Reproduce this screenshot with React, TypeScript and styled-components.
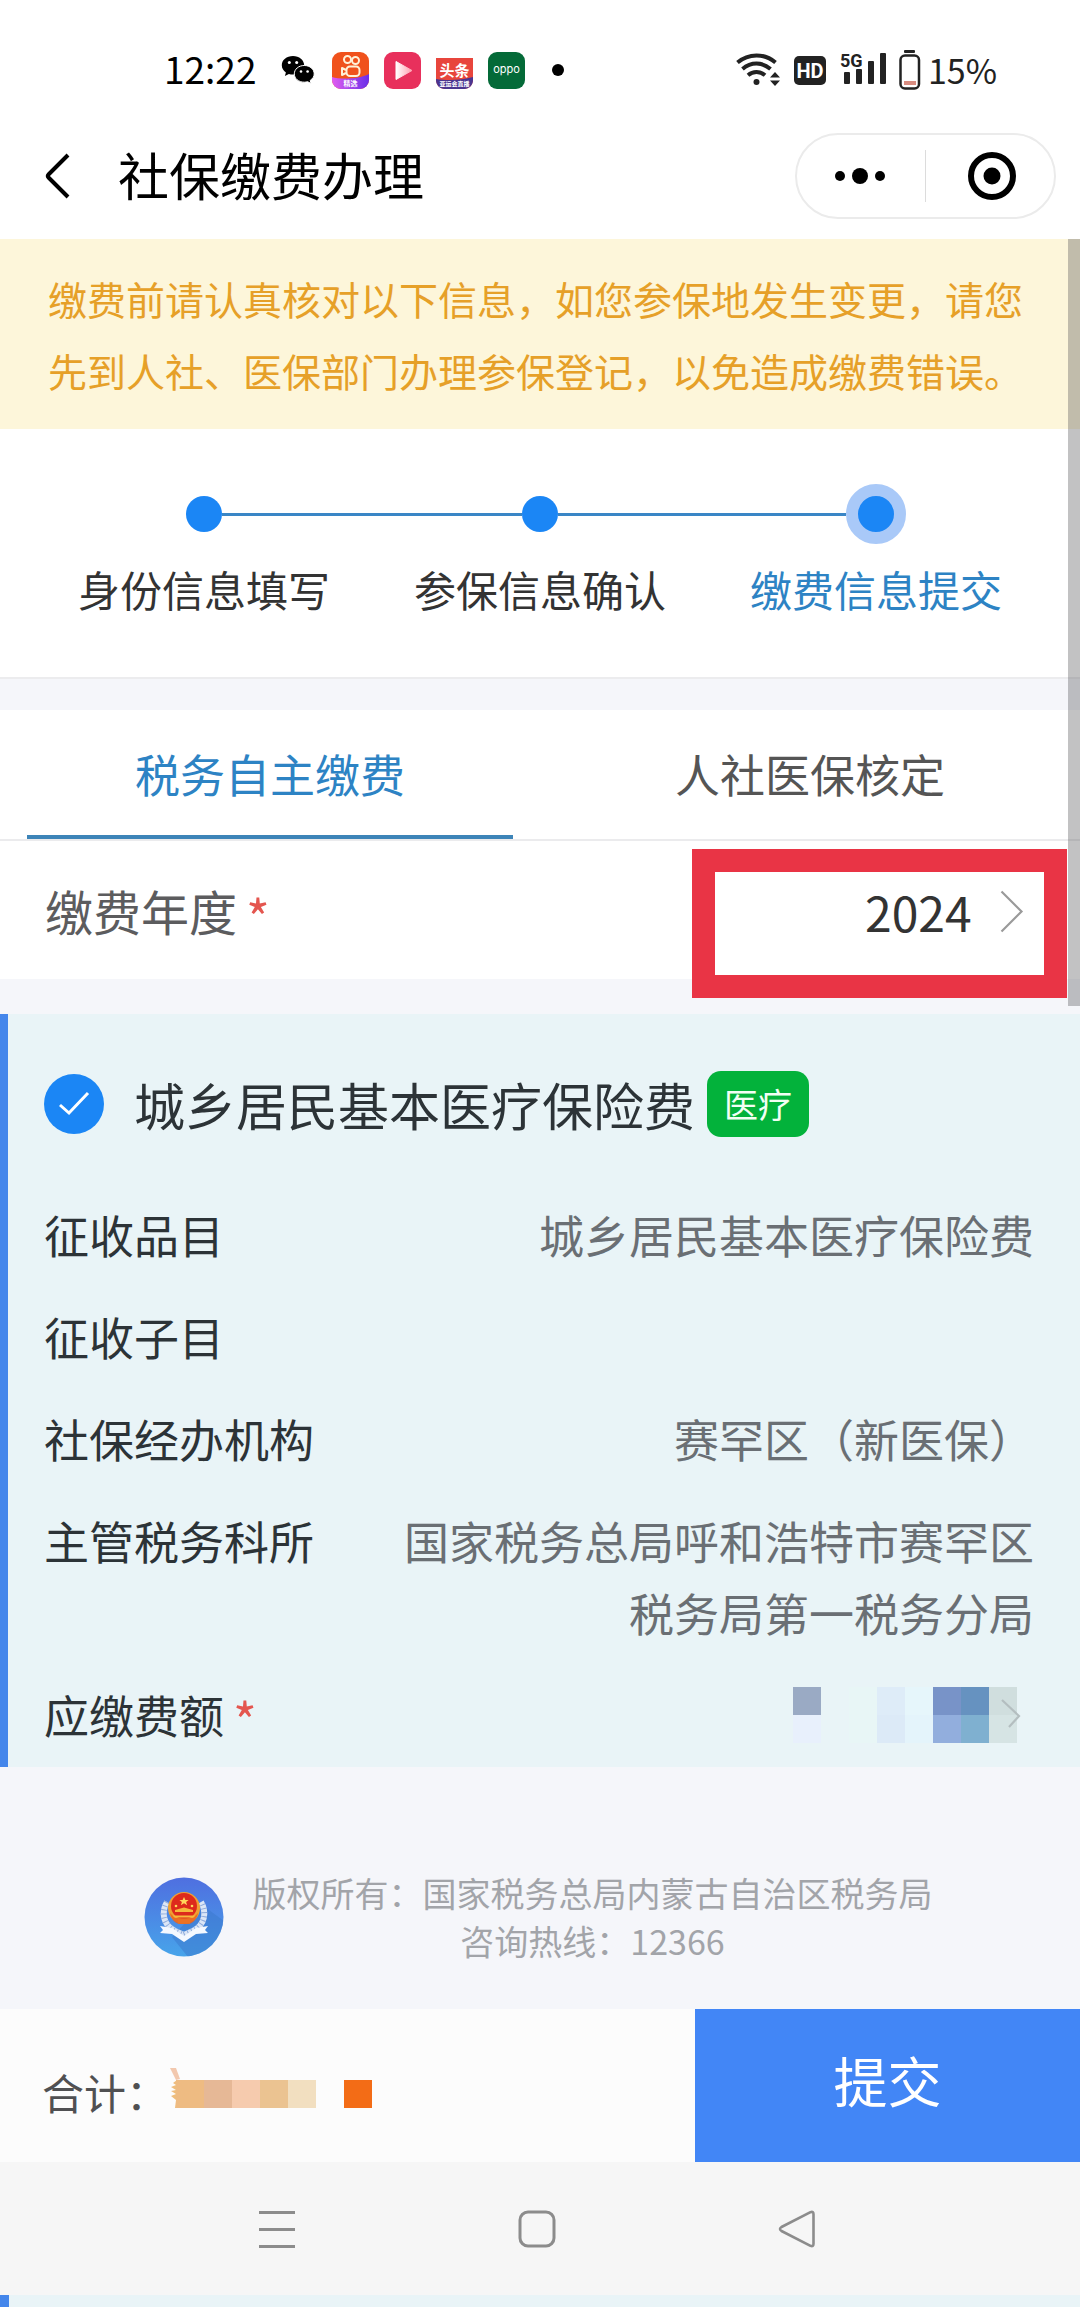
import React from "react";
import styled, { createGlobalStyle } from "styled-components";

const FONT = `"Noto Sans CJK SC", "Noto Sans", sans-serif`;

const color = {
  ink: "#333333",
  cardInk: "#2c3337",
  muted: "#6a6f74",
  faint: "#a2a4a9",
  link: "#2d83c4",
  primary: "#1b86f5",
  submit: "#4286f6",
  cardBar: "#4486eb",
  card: "#e9f4f7",
  band: "#f5f6fa",
  required: "#e4564f",
  callout: "#e93445",
};

const GlobalStyle = createGlobalStyle`
  *, *::before, *::after { box-sizing: border-box; }
  body {
    margin: 0;
    background: #fff;
    color: ${color.ink};
    font-family: ${FONT};
  }
  button, select, input {
    margin: 0;
    padding: 0;
    border: 0;
    background: none;
    color: inherit;
    font: inherit;
  }
  button, select, label { cursor: pointer; }
  p, h1, h2, ol, dl, dd { margin: 0; padding: 0; font-weight: 400; }
  svg { display: block; flex: none; overflow: visible; }
`;

const Page = styled.div`
  display: flex;
  flex-direction: column;
`;

/* ---------- status bar ---------- */

const StatusBar = styled.div`
  display: flex;
  align-items: center;
  justify-content: space-between;
  height: 112px;
  padding: 28px 83px 0 164px;
`;

const StatusGroup = styled.div<{ $gap: number }>`
  display: flex;
  align-items: center;
  gap: ${(p) => p.$gap}px;
`;

const Clock = styled.span`
  margin-right: 10px;
  padding-bottom: 4px;
  color: #000;
  font-size: 37px;
  line-height: 44px;
`;

const BatteryText = styled.span`
  color: #222;
  font-size: 34px;
  line-height: 44px;
`;

const MoreIndicator = styled.span`
  margin-left: 12px;
`;

const SignalWrap = styled.span`
  margin-left: 3px;
`;

/* ---------- header ---------- */

const Header = styled.header`
  display: flex;
  align-items: center;
  height: 127px;
  padding: 0 24px 0 45px;
`;

const Title = styled.h1`
  flex: 1;
  margin-left: 48px;
  padding-bottom: 3px;
  color: #000;
  font-size: 51px;
  line-height: 72px;
`;

const Capsule = styled.div`
  display: flex;
  align-items: center;
  width: 261px;
  height: 86px;
  border: 2px solid #ebebeb;
  border-radius: 43px;
`;

const CapsuleButton = styled.button`
  display: flex;
  flex: 1;
  justify-content: center;
`;

const CapsuleDivider = styled.span`
  width: 1px;
  height: 52px;
  background: #dcdcdc;
`;

/* ---------- content ---------- */

const Main = styled.main`
  position: relative;
  background: ${color.band};
`;

const ScrollThumb = styled.div`
  position: absolute;
  top: 0;
  right: 0;
  z-index: 2;
  width: 12px;
  height: 767px;
  background: rgba(80, 80, 84, 0.35);
`;

const Notice = styled.p`
  padding: 23px 48px 23px;
  background: #fdf6da;
  color: #e6a028;
  font-size: 39px;
  line-height: 72px;
`;

const Steps = styled.ol`
  display: flex;
  padding: 55px 36px 58px;
  background: #fff;
  border-bottom: 2px solid #ececee;
  list-style: none;
`;

const Step = styled.li`
  display: flex;
  flex: 1;
  flex-direction: column;
  gap: 15px;
`;

const StepTrack = styled.div`
  display: flex;
  align-items: center;
  height: 60px;
`;

const StepLine = styled.span<{ $shown: boolean }>`
  flex: 1;
  height: 3px;
  background: ${(p) => (p.$shown ? "#3a86c6" : "transparent")};
`;

const StepDot = styled.span<{ $current: boolean }>`
  width: ${(p) => (p.$current ? 60 : 36)}px;
  height: ${(p) => (p.$current ? 60 : 36)}px;
  border: ${(p) => (p.$current ? "12px solid #a9c9f8" : "0")};
  border-radius: 50%;
  background: ${color.primary};
`;

const StepLabel = styled.span<{ $current: boolean }>`
  color: ${(p) => (p.$current ? color.link : color.ink)};
  font-size: 42px;
  line-height: 60px;
  text-align: center;
`;

const Tabs = styled.div`
  display: flex;
  margin-top: 31px;
  background: #fff;
  border-bottom: 2px solid #ebebed;
`;

const Tab = styled.button<{ $active: boolean }>`
  flex: 1;
  margin: 0 27px;
  padding: 31px 0 28px;
  border-bottom: 4px solid ${(p) => (p.$active ? "#3d84b8" : "transparent")};
  color: ${(p) => (p.$active ? color.link : "#555")};
  font-size: 45px;
  line-height: 66px;
`;

const YearRow = styled.div`
  position: relative;
  display: flex;
  align-items: center;
  justify-content: space-between;
  padding: 33px 57px 31px 45px;
  background: #fff;
  font-size: 48px;
  line-height: 72px;
`;

const YearLabel = styled.label`
  height: 74px;
  color: #5c5c5e;
`;

const Required = styled.span`
  margin-left: 9px;
  color: ${color.required};
  font-size: 51px;
  line-height: 0;
  vertical-align: -7px;
`;

const YearPicker = styled.div`
  display: flex;
  align-items: center;
  gap: 28px;
`;

const YearSelect = styled.select`
  appearance: none;
  height: 72px;
  padding-bottom: 5px;
  outline: 0;
`;

const Callout = styled.div`
  position: absolute;
  top: 8px;
  right: 13px;
  z-index: 1;
  width: 375px;
  height: 149px;
  border: 23px solid ${color.callout};
  pointer-events: none;
`;

/* ---------- insurance card ---------- */

const Card = styled.section`
  margin-top: 35px;
  padding: 57px 46px 16px 36px;
  border-left: 8px solid ${color.cardBar};
  background: ${color.card};
  color: ${color.cardInk};
`;

const CardHead = styled.div`
  display: flex;
  align-items: center;
  height: 66px;
  margin-bottom: 62px;
`;

const CardLabel = styled.label`
  display: flex;
  align-items: center;
  gap: 30px;
  font-size: 51px;
  line-height: 66px;
`;

const CheckMark = styled.span`
  display: grid;
  place-items: center;

  > * { grid-area: 1 / 1; }
`;

const CheckInput = styled.input`
  appearance: none;
  width: 60px;
  height: 60px;
  border-radius: 50%;
  background: ${color.primary};
`;

const Badge = styled.span`
  margin-left: 12px;
  padding: 0 17px;
  border-radius: 14px;
  background: #03b23b;
  color: #f2fff4;
  font-size: 34px;
  line-height: 66px;
`;

const Fields = styled.dl`
  display: flex;
  flex-direction: column;
  gap: 30px;
  font-size: 45px;
  line-height: 72px;
`;

const Field = styled.div`
  display: flex;
  justify-content: space-between;
  gap: 72px;
`;

const FieldName = styled.dt`
  flex: none;
  height: 72px;
`;

const FieldValue = styled.dd`
  color: ${color.muted};
  text-align: right;
`;

const AmountButton = styled.button`
  display: flex;
  align-items: center;
  height: 72px;
  padding-right: 13px;
`;

const Mosaic = styled.span<{ $columns: number }>`
  display: grid;
  grid-template-columns: repeat(${(p) => p.$columns}, 28px);
  grid-auto-rows: 28px;
`;

const Tile = styled.span<{ $fill: string }>`
  background: ${(p) => p.$fill};
`;

const AmountChevron = styled.span`
  margin-left: -17px;
`;

/* ---------- footer ---------- */

const Footer = styled.footer`
  display: flex;
  align-items: center;
  justify-content: center;
  gap: 29px;
  padding: 102px 4px 44px 0;
  color: ${color.faint};
  font-size: 34px;
  line-height: 48px;
  text-align: center;
`;

const TotalBar = styled.div`
  display: flex;
  height: 153px;
  background: #fcfcfc;
`;

const Total = styled.div`
  display: flex;
  flex: 1;
  align-items: center;
  padding: 16px 0 0 42px;
  color: #505052;
  font-size: 42px;
  line-height: 60px;
`;

const TotalLabel = styled.span`
  padding-bottom: 4px;
`;

const SubmitButton = styled.button`
  width: 385px;
  padding-bottom: 12px;
  background: ${color.submit};
  color: #fff;
  font-size: 54px;
  line-height: 72px;
`;

const NavBar = styled.nav`
  display: flex;
  align-items: center;
  justify-content: center;
  gap: 220px;
  height: 133px;
  padding-right: 6px;
  background: #f6f6f6;
`;

const NextCardEdge = styled.div`
  height: 13px;
  border-left: 9px solid ${color.cardBar};
  background: ${color.card};
`;

/* ---------- drawings ---------- */

const WechatIcon = () => (
  <svg width="36" height="30" viewBox="0 0 36 30">
    <path
      d="M12 1C5.6 1 .8 5 .8 10.300c0 3 1.600 5.500 4.100 7.200L3.900 21l4-2c1.300.4 2.600.6 4.100.6 6.200 0 11.200-4.100 11.200-9.300S18.200 1 12 1z"
      fill="#000"
    />
    <circle cx="8.300" cy="7.500" r="1.500" fill="#fff" />
    <circle cx="15.700" cy="7.500" r="1.500" fill="#fff" />
    <path
      d="M23.300 10.500c-5.700 0-10 3.700-10 8.400 0 4.600 4.300 8.300 10 8.300 1.200 0 2.300-.2 3.300-.5l3.500 1.900-.9-3.200c2.500-1.600 4-3.900 4-6.500 0-4.700-4.200-8.400-9.900-8.400z"
      fill="#000"
      stroke="#fff"
      strokeWidth="1"
    />
    <circle cx="20" cy="16.500" r="1.300" fill="#fff" />
    <circle cx="26.600" cy="16.500" r="1.300" fill="#fff" />
  </svg>
);

const KuaishouIcon = () => (
  <svg width="37" height="37" viewBox="0 0 37 37">
    <defs>
      <clipPath id="ks-clip"><rect width="37" height="37" rx="9" /></clipPath>
      <linearGradient id="ks-low" x1="0" x2="1" y1="0" y2="0">
        <stop offset="0" stopColor="#e05cf0" />
        <stop offset="1" stopColor="#6a2fe8" />
      </linearGradient>
    </defs>
    <g clipPath="url(#ks-clip)">
      <rect width="37" height="37" fill="#f0521c" />
      <path d="M0 25c8 2.500 26 2.500 37-3v15H0z" fill="url(#ks-low)" />
      <g fill="none" stroke="#fff1d8" strokeWidth="2">
        <circle cx="15.500" cy="7.500" r="3.500" />
        <circle cx="23.500" cy="8.500" r="3.500" />
        <rect x="14.500" y="14.500" width="13" height="9.500" rx="3.500" />
        <path d="M14 18l-4-2v7l4-2" strokeLinejoin="round" />
      </g>
      <text x="18.500" y="34" fill="#fff" fontFamily={FONT} fontSize="7" fontWeight="700" textAnchor="middle">精选</text>
    </g>
  </svg>
);

const VideoIcon = () => (
  <svg width="37" height="37" viewBox="0 0 37 37">
    <defs>
      <linearGradient id="play-fill" x1="0" x2="1" y1="0" y2="0">
        <stop offset="0" stopColor="#fff" />
        <stop offset="1" stopColor="#ff9fb0" />
      </linearGradient>
    </defs>
    <rect width="37" height="37" rx="9" fill="#e8305c" />
    <path d="M12 9.500v18L28 18.500z" fill="url(#play-fill)" strokeLinejoin="round" stroke="url(#play-fill)" />
  </svg>
);

const ToutiaoIcon = () => (
  <svg width="37" height="37" viewBox="0 0 37 37">
    <defs>
      <clipPath id="tt-clip"><path d="M0 6h37v22c0 5-4 9-9 9H9c-5 0-9-4-9-9z" /></clipPath>
    </defs>
    <g clipPath="url(#tt-clip)">
      <rect width="37" height="37" fill="#e8453c" />
      <path d="M0 27c10 1.500 26 1.500 37-2v12H0z" fill="#4a3590" />
      <text x="18.500" y="24" fill="#fff" fontFamily={FONT} fontSize="15" fontWeight="700" textAnchor="middle">头条</text>
      <text x="18.500" y="34" fill="#fff" fontFamily={FONT} fontSize="6" fontWeight="700" textAnchor="middle">亚运会直播</text>
    </g>
  </svg>
);

const OppoIcon = () => (
  <svg width="37" height="37" viewBox="0 0 37 37">
    <rect width="37" height="37" rx="9" fill="#046a38" />
    <text x="18.500" y="21" fill="#fff" fontFamily="Inter, sans-serif" fontSize="11" textAnchor="middle">oppo</text>
  </svg>
);

const MoreDot = () => (
  <svg width="12" height="12" viewBox="0 0 12 12">
    <circle cx="6" cy="6" r="6" />
  </svg>
);

const WifiIcon = () => (
  <svg width="47" height="36" viewBox="0 0 47 36" fill="none" stroke="#222" strokeWidth="4">
    <path d="M1.500 10.500C12.500 1 28.500 1 39.500 10.500" />
    <path d="M6.500 17C15 9.700 26 9.700 34.500 17" />
    <path d="M12 23.300c5-4.300 12-4.300 17 0" />
    <circle cx="20.500" cy="30" r="3" fill="#222" stroke="none" />
    <path d="M39 20l5 5.500H34zM39 34l5-5.500H34z" fill="#222" stroke="none" />
  </svg>
);

const HdIcon = () => (
  <svg width="32" height="29" viewBox="0 0 32 29">
    <rect width="32" height="29" rx="5" fill="#222" />
    <text x="16" y="22" fill="#fff" fontFamily="Roboto, sans-serif" fontSize="20" fontWeight="700" textAnchor="middle">HD</text>
  </svg>
);

const SignalIcon = () => (
  <svg width="48" height="40" viewBox="0 0 48 40" fill="#222">
    <text x="0" y="17" fontFamily="Roboto, sans-serif" fontSize="18" fontWeight="700">5G</text>
    <rect x="4" y="22" width="6" height="12" rx="1" />
    <rect x="16" y="19" width="6" height="15" rx="1" />
    <rect x="28" y="11" width="6" height="23" rx="1" />
    <rect x="40" y="3" width="6" height="31" rx="1" />
  </svg>
);

const BatteryIcon = () => (
  <svg width="22" height="40" viewBox="0 0 22 40">
    <rect x="5" y="0" width="11" height="3" rx="1" fill="#222" />
    <rect x="1.500" y="5.500" width="18.500" height="33" rx="4.500" fill="none" stroke="#222" strokeWidth="2.500" />
    <rect x="5" y="31" width="12" height="4" fill="#d88c80" />
  </svg>
);

const BackIcon = () => (
  <svg width="25" height="46" viewBox="0 0 25 46" fill="none" stroke="#000" strokeWidth="4">
    <path d="M23 2L3.500 21.500q-1.500 1.500 0 3L23 44" />
  </svg>
);

const DotsIcon = () => (
  <svg width="54" height="18" viewBox="0 0 54 18">
    <circle cx="6" cy="9" r="5" />
    <circle cx="26" cy="9" r="8" />
    <circle cx="46" cy="9" r="5" />
  </svg>
);

const TargetIcon = () => (
  <svg width="54" height="50" viewBox="-4 0 54 50">
    <circle cx="25" cy="25" r="21" fill="none" stroke="#000" strokeWidth="6" />
    <circle cx="25" cy="25" r="8.500" />
  </svg>
);

const ChevronIcon = () => (
  <svg width="23" height="43" viewBox="0 0 23 43" fill="none" stroke="#9a9a9a" strokeWidth="2.200">
    <path d="M1.500 1.500l20 20-20 20" />
  </svg>
);

const SmallChevronIcon = () => (
  <svg width="21" height="32" viewBox="0 0 21 32" fill="none" stroke="#b4bec0" strokeWidth="2.200">
    <path d="M2 1l17 16L9 28" />
  </svg>
);

const TickIcon = () => (
  <svg width="32" height="26" viewBox="0 0 32 26" fill="none" stroke="#fff" strokeWidth="3">
    <path d="M2 14l9 8L30 2" />
  </svg>
);

const EmblemIcon = () => (
  <svg width="80" height="80" viewBox="0 0 80 80">
    <defs>
      <linearGradient id="emblem-bg" x1="0" x2="0" y1="0" y2="1">
        <stop offset="0" stopColor="#4f6fe0" />
        <stop offset="1" stopColor="#47a4ea" />
      </linearGradient>
      <clipPath id="emblem-clip"><circle cx="40" cy="40" r="39.500" /></clipPath>
    </defs>
    <circle cx="40" cy="40" r="39.500" fill="url(#emblem-bg)" />
    <path d="M58 28l22 16v36H44L28 60z" fill="#3a78cc" opacity=".5" clipPath="url(#emblem-clip)" />
    <path d="M23 25c-6 10-4 23 8 29l9 4 9-4c12-6 14-19 8-29" fill="none" stroke="#dce6f6" strokeWidth="6" />
    <path d="M23 25c-6 10-4 23 8 29l9 4 9-4c12-6 14-19 8-29" fill="none" stroke="#8fabdc" strokeWidth="6" strokeDasharray="1 3" />
    <path d="M16 49l12 2 12 8 12-8 12-2-3 4 3 3-12 1-12 8-12-8-12-1 3-3z" fill="#f4f8ff" />
    <circle cx="40" cy="31" r="16" fill="#f0a032" />
    <circle cx="40" cy="29" r="13" fill="#dd2a1c" />
    <path d="M40 20l1.400 3h3.200l-2.500 2 1 3.200-3.100-2-3.100 2 1-3.200-2.500-2h3.200z" fill="#ffd75a" />
    <circle cx="32" cy="29" r="1.300" fill="#ffd75a" />
    <circle cx="48" cy="29" r="1.300" fill="#ffd75a" />
    <path d="M31 35h18v-2l-9-2.500-9 2.500zM29 38.500h22v2H29zM34 42.500h12v4H34z" fill="#f6b93c" />
    <path d="M26 36c1 6 5 10 9 11h10c4-1 8-5 9-11l-5 5H31z" fill="#e8601f" opacity=".8" />
  </svg>
);

const SparkMark = () => (
  <svg width="8" height="54" viewBox="-2 0 8 54">
    <path d="M0 1h6l4 11-4 1z" fill="#f2c8ae" />
    <path d="M7 13L3 16l3 2-5 2 5 3-5 1 5 3-5 2 5 4-1 8h3z" fill="#efbd7c" />
  </svg>
);

const MenuIcon = () => (
  <svg width="40" height="40" viewBox="0 0 40 40" stroke="#8c8c8c" strokeWidth="3">
    <path d="M2 3.500h36M2 20.500h36M2 37.500h36" />
  </svg>
);

const HomeIcon = () => (
  <svg width="40" height="40" viewBox="0 0 40 40" fill="none" stroke="#8c8c8c" strokeWidth="3">
    <rect x="3" y="3" width="34" height="34" rx="8" />
  </svg>
);

const ReturnIcon = () => (
  <svg width="40" height="40" viewBox="0 0 40 40" fill="none" stroke="#8c8c8c" strokeWidth="2.600" strokeLinejoin="round">
    <path d="M33.500 3.200q3-1.200 3 2v29.600q0 3.200-3 2L4.500 22q-3-2 0-4z" />
  </svg>
);

/* ---------- data ---------- */

const steps = ["身份信息填写", "参保信息确认", "缴费信息提交"];
const currentStep = 2;

const fields = [
  { name: "征收品目", value: "城乡居民基本医疗保险费" },
  { name: "征收子目", value: "" },
  { name: "社保经办机构", value: "赛罕区（新医保）" },
  { name: "主管税务科所", value: "国家税务总局呼和浩特市赛罕区税务局第一税务分局" },
];

const amountTiles = [
  "#9aaac4", "transparent", "#e8f6f6", "#deecf8", "#e6f6fb", "#7893c8", "#6692c0", "#d0dede",
  "#e8f0fc", "transparent", "#e8f6f6", "#dceaf7", "#e4f4fb", "#92aedd", "#7fb0d0", "#d6e4e4",
];

const totalTiles = ["#eebb82", "#e6b896", "#f6cbae", "#ebc391", "#f2dfc0", "transparent", "#f36c16"];

export default function App() {
  return (
    <Page lang="zh-CN">
      <GlobalStyle />

      <StatusBar>
        <StatusGroup $gap={15}>
          <Clock>12:22</Clock>
          <WechatIcon />
          <KuaishouIcon />
          <VideoIcon />
          <ToutiaoIcon />
          <OppoIcon />
          <MoreIndicator><MoreDot /></MoreIndicator>
        </StatusGroup>
        <StatusGroup $gap={11}>
          <WifiIcon />
          <HdIcon />
          <SignalWrap><SignalIcon /></SignalWrap>
          <StatusGroup $gap={7}>
            <BatteryIcon />
            <BatteryText>15%</BatteryText>
          </StatusGroup>
        </StatusGroup>
      </StatusBar>

      <Header>
        <button type="button" aria-label="返回"><BackIcon /></button>
        <Title>社保缴费办理</Title>
        <Capsule>
          <CapsuleButton type="button" aria-label="更多"><DotsIcon /></CapsuleButton>
          <CapsuleDivider />
          <CapsuleButton type="button" aria-label="关闭"><TargetIcon /></CapsuleButton>
        </Capsule>
      </Header>

      <Main>
        <ScrollThumb />
        <Notice>
          缴费前请认真核对以下信息，如您参保地发生变更，请您先到人社、医保部门办理参保登记，以免造成缴费错误。
        </Notice>

        <Steps>
          {steps.map((label, i) => (
            <Step key={label} aria-current={i === currentStep ? "step" : undefined}>
              <StepTrack>
                <StepLine $shown={i > 0} />
                <StepDot $current={i === currentStep} />
                <StepLine $shown={i < steps.length - 1} />
              </StepTrack>
              <StepLabel $current={i === currentStep}>{label}</StepLabel>
            </Step>
          ))}
        </Steps>

        <Tabs role="tablist">
          <Tab type="button" role="tab" aria-selected $active>税务自主缴费</Tab>
          <Tab type="button" role="tab" aria-selected={false} $active={false}>人社医保核定</Tab>
        </Tabs>

        <YearRow>
          <YearLabel htmlFor="year">缴费年度<Required>*</Required></YearLabel>
          <YearPicker>
            <YearSelect id="year" defaultValue="2024">
              <option>2024</option>
            </YearSelect>
            <ChevronIcon />
          </YearPicker>
          <Callout />
        </YearRow>

        <Card>
          <CardHead>
            <CardLabel>
              <CheckMark>
                <CheckInput type="checkbox" defaultChecked />
                <TickIcon />
              </CheckMark>
              城乡居民基本医疗保险费
            </CardLabel>
            <Badge>医疗</Badge>
          </CardHead>
          <Fields>
            {fields.map((f) => (
              <Field key={f.name}>
                <FieldName>{f.name}</FieldName>
                <FieldValue>{f.value}</FieldValue>
              </Field>
            ))}
            <Field>
              <FieldName>应缴费额<Required>*</Required></FieldName>
              <dd>
                <AmountButton type="button" aria-label="应缴费额">
                  <Mosaic $columns={8}>
                    {amountTiles.map((fill, i) => <Tile key={i} $fill={fill} />)}
                  </Mosaic>
                  <AmountChevron><SmallChevronIcon /></AmountChevron>
                </AmountButton>
              </dd>
            </Field>
          </Fields>
        </Card>

        <Footer>
          <EmblemIcon />
          <div>
            <p>版权所有：国家税务总局内蒙古自治区税务局</p>
            <p>咨询热线：12366</p>
          </div>
        </Footer>
      </Main>

      <TotalBar>
        <Total>
          <TotalLabel>合计：</TotalLabel>
          <SparkMark />
          <Mosaic $columns={7}>
            {totalTiles.map((fill, i) => <Tile key={i} $fill={fill} />)}
          </Mosaic>
        </Total>
        <SubmitButton type="button">提交</SubmitButton>
      </TotalBar>

      <NavBar>
        <button type="button" aria-label="最近任务"><MenuIcon /></button>
        <button type="button" aria-label="主屏幕"><HomeIcon /></button>
        <button type="button" aria-label="返回上一级"><ReturnIcon /></button>
      </NavBar>
      <NextCardEdge />
    </Page>
  );
}
